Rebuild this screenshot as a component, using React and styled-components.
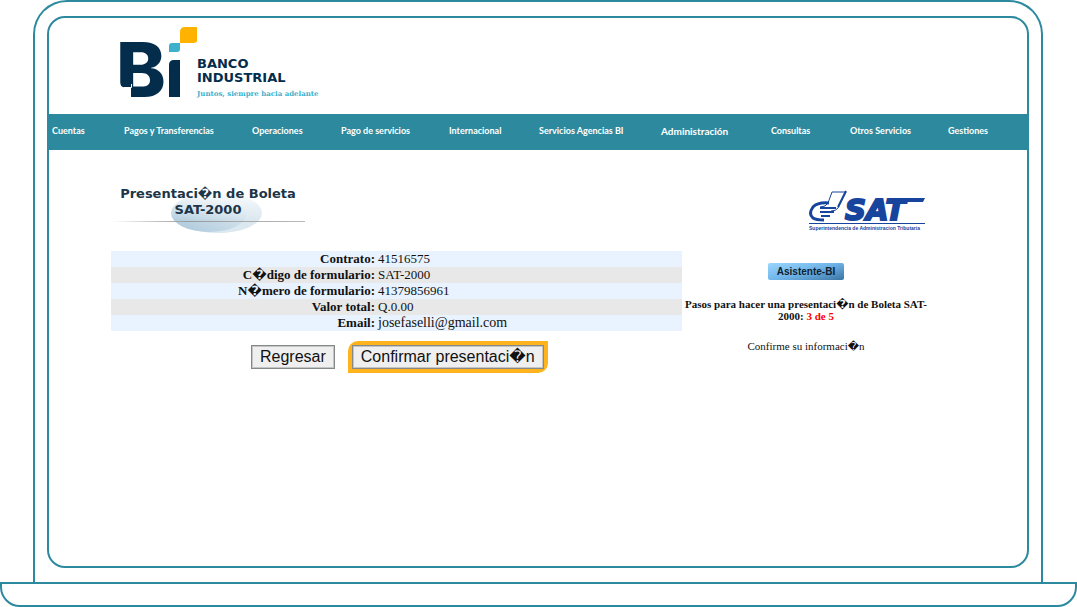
import React from "react"
import styled, { createGlobalStyle, ThemeProvider } from "styled-components"

const theme = {
  colors: {
    teal: "#2d8a9e",
    navy: "#042c4b",
    sky: "#3db1cb",
    highlight: "#ffb31c",
    rowBlue: "#e8f3ff",
    rowGray: "#e8e8e8",
  },
}

const GlobalStyle = createGlobalStyle`
  * {
    box-sizing: border-box;
  }

  body {
    margin: 0;
    background: #fff;
    color: #111;
    font-family: "Liberation Serif", "DejaVu Sans", serif;
  }
`

const Laptop = styled.div`
  min-height: 100vh;
  display: flex;
  flex-direction: column;
`

const Lid = styled.div`
  flex: 1;
  display: flex;
  margin: 0 34px 0 33px;
  padding: 14px 12px;
  border: 2px solid ${({ theme }) => theme.colors.teal};
  border-bottom: none;
  border-radius: 34px 34px 0 0;
`

const Base = styled.div`
  height: 25px;
  border: 2px solid ${({ theme }) => theme.colors.teal};
  border-radius: 0 0 20px 20px;
`

const Screen = styled.div`
  flex: 1;
  min-width: 0;
  overflow: hidden;
  border: 2px solid ${({ theme }) => theme.colors.teal};
  border-radius: 18px;
`

const Header = styled.header`
  display: flex;
  height: 96px;
  padding-left: 61px;
`

const BankName = styled.div`
  padding-top: 39px;
  color: ${({ theme }) => theme.colors.navy};
  font-family: "DejaVu Sans", sans-serif;
  font-size: 13px;
  font-weight: bold;
  line-height: 14px;

  p {
    margin: 0;
  }

  .tagline {
    padding-top: 2px;
    color: ${({ theme }) => theme.colors.sky};
    font-family: "DejaVu Serif", serif;
    font-size: 7px;
  }
`

const Nav = styled.nav`
  display: grid;
  grid-template-columns: 72fr 128fr 89fr 108fr 90fr 122fr 110fr 79fr 98fr 79fr;
  align-items: center;
  height: 36px;
  padding: 0 0 2px 3px;
  background: ${({ theme }) => theme.colors.teal};
`

const NavLink = styled.a`
  color: #fff;
  font-family: Lato, sans-serif;
  font-size: ${({ $large }) => ($large ? "10px" : "9px")};
  font-weight: bold;
  line-height: 12px;
  white-space: nowrap;
  text-decoration: none;
`

const Content = styled.main`
  display: grid;
  grid-template-columns: minmax(0, 571fr) minmax(0, 248fr);
  padding: 36px 97px 0 62px;
`

const TitleBlock = styled.div`
  display: grid;
  width: 194px;
  height: 65px;

  > * {
    grid-area: 1 / 1;
  }
`

const Title = styled.h1`
  margin: 0;
  color: #1c3549;
  font-family: "DejaVu Sans", sans-serif;
  font-size: 13px;
  line-height: 16px;
  text-align: center;
`

const SatSlot = styled.div`
  display: flex;
  justify-content: flex-end;
  padding-right: 4px;
`

const Details = styled.table`
  width: 100%;
  border-collapse: collapse;
  font-size: 13px;
  line-height: 16px;

  tr {
    background: ${({ theme }) => theme.colors.rowBlue};
  }

  tr:nth-child(even) {
    background: ${({ theme }) => theme.colors.rowGray};
  }

  th {
    width: 264px;
    padding: 0;
    text-align: right;
  }

  td {
    padding: 0 0 0 3px;
  }

  tr:last-child td {
    font-size: 14px;
  }
`

const Actions = styled.div`
  display: flex;
  align-items: center;
  gap: 13px;
  padding: 10px 0 0 140px;
`

const ActionButton = styled.button`
  height: 24px;
  padding: 0 8px;
  border: 1px solid #858989;
  box-shadow: inset 0 0 0 1px #c4c6c6;
  background: #efefef;
  color: #111;
  font-family: "Liberation Sans", "DejaVu Sans", sans-serif;
  font-size: 16px;
  line-height: 20px;
  white-space: nowrap;
`

const Highlight = styled.div`
  display: flex;
  border: 4px solid ${({ theme }) => theme.colors.highlight};
  border-radius: 10px 0 10px 0;
`

const Aside = styled.aside`
  display: flex;
  flex-direction: column;
  align-items: center;
  padding-top: 12px;
  font-size: 11px;
  line-height: 12px;
  text-align: center;

  p {
    margin: 18px 0 0;
  }

  .step {
    color: #f00;
  }
`

const AssistantButton = styled.button`
  width: 76px;
  height: 17px;
  padding: 0;
  border: none;
  border-radius: 2px;
  background: linear-gradient(165deg, #9bd6ff 0%, #6fb4e8 50%, #3a75a4 100%);
  color: #10222f;
  font-family: "Liberation Sans", sans-serif;
  font-size: 10px;
  font-weight: bold;
  line-height: 16px;
`

const navItems = [
  "Cuentas",
  "Pagos y Transferencias",
  "Operaciones",
  "Pago de servicios",
  "Internacional",
  "Servicios Agencias BI",
  "Administración",
  "Consultas",
  "Otros Servicios",
  "Gestiones",
]

const details = [
  ["Contrato:", "41516575"],
  ["C\uFFFDdigo de formulario:", "SAT-2000"],
  ["N\uFFFDmero de formulario:", "41379856961"],
  ["Valor total:", "Q.0.00"],
  ["Email:", "josefaselli@gmail.com"],
]

const BiMark = () => (
  <svg width="87" height="104" viewBox="-10 -8 87 104" aria-hidden="true">
    <text
      x="-4"
      y="71"
      fill="#042c4b"
      fontFamily="Inter"
      fontSize="75"
      fontWeight="800"
    >
      B
    </text>
    {/* notch under the stem */}
    <path d="M-2 56 H0 Q0 61 5 61.500 H11 V73 H-2 Z" fill="#fff" />
    <path d="M11.500 58 V61.500 H4" fill="none" stroke="#fff" strokeWidth="1" />
    <path d="M49 71 V39 Q49 34 54 34 H60 V71 Z" fill="#042c4b" />
    <path d="M49 26 V20 Q49 17 52 17 H60 V23 Q60 26 57 26 Z" fill="#3db1cb" />
    <path d="M60 17 V6 Q60 1 65 1 H78 V12 Q78 17 73 17 Z" fill="#ffb300" />
  </svg>
)

const Swoosh = () => (
  <svg width="194" height="56" viewBox="0 0 194 56" aria-hidden="true">
    <defs>
      <linearGradient id="swoosh" x1="0" y1="1" x2="1" y2="0">
        <stop offset="0" stopColor="#a9c6da" />
        <stop offset="0.500" stopColor="#c9dce8" />
        <stop offset="1" stopColor="#eaf2f7" />
      </linearGradient>
      <linearGradient id="fade" x1="0" y1="0" x2="0" y2="1">
        <stop offset="0" stopColor="#fff" />
        <stop offset="1" stopColor="#fff" stopOpacity="0" />
      </linearGradient>
      <linearGradient id="rule">
        <stop offset="0" stopColor="#fff" />
        <stop offset="0.400" stopColor="#999" />
        <stop offset="1" stopColor="#bbb" />
      </linearGradient>
    </defs>
    <ellipse cx="107" cy="27" rx="44" ry="20" fill="#dbe8f0" />
    <ellipse cx="98" cy="27" rx="38" ry="19" fill="url(#swoosh)" />
    <rect x="50" y="0" width="104" height="34" fill="url(#fade)" />
    <rect x="0" y="35" width="194" height="1" fill="url(#rule)" />
  </svg>
)

const SatLogo = () => (
  <svg width="118" height="46" viewBox="0 0 118 46" role="img" aria-label="SAT">
    <g fill="none" stroke="#17449c">
      {/* quill */}
      <path d="M24 6 H38 L30 22 Q28 25 23 25" strokeWidth="1" />
      <path d="M38 5 L30 21" strokeWidth="2" />
      <path d="M24 6 L20 17 Q18 21 12 21" strokeWidth="1" />
      {/* hand */}
      <path d="M21 17 Q10 16 5 21 Q0 28 5 32 Q8 34 16 34" strokeWidth="3" />
      <path d="M12 22 H28 M12 26 H26 M13 30 H22" strokeWidth="2" />
    </g>
    <text
      x="37"
      y="34"
      fill="#17449c"
      stroke="#17449c"
      strokeWidth="2"
      fontFamily="DejaVu Sans"
      fontSize="29"
      fontWeight="bold"
      fontStyle="oblique"
    >
      SAT
    </text>
    <path d="M82 12 H117 L115 16 H82 Z" fill="#17449c" />
    <path d="M1 37.500 H117" stroke="#17449c" strokeWidth="1" />
    <text
      x="1"
      y="44"
      fill="#17449c"
      fontFamily="Liberation Sans"
      fontSize="5"
      fontWeight="bold"
    >
      Superintendencia de Administracion Tributaria
    </text>
  </svg>
)

const App = () => {
  return (
    <ThemeProvider theme={theme}>
      <GlobalStyle />
      <Laptop>
        <Lid>
          <Screen>
            <Header>
              <BiMark />
              <BankName>
                <p>BANCO</p>
                <p>INDUSTRIAL</p>
                <p className="tagline">Juntos, siempre hacia adelante</p>
              </BankName>
            </Header>
            <Nav>
              {navItems.map((item) => (
                <NavLink
                  key={item}
                  href="#"
                  $large={item === "Administración"}
                >
                  {item}
                </NavLink>
              ))}
            </Nav>
            <Content>
              <TitleBlock>
                <Swoosh />
                <Title>Presentaci{"\uFFFD"}n de Boleta SAT-2000</Title>
              </TitleBlock>
              <SatSlot>
                <SatLogo />
              </SatSlot>
              <section>
                <Details>
                  <tbody>
                    {details.map(([label, value]) => (
                      <tr key={label}>
                        <th scope="row">{label}</th>
                        <td>{value}</td>
                      </tr>
                    ))}
                  </tbody>
                </Details>
                <Actions>
                  <ActionButton type="button">Regresar</ActionButton>
                  <Highlight>
                    <ActionButton type="button">
                      Confirmar presentaci{"\uFFFD"}n
                    </ActionButton>
                  </Highlight>
                </Actions>
              </section>
              <Aside>
                <AssistantButton type="button">Asistente-BI</AssistantButton>
                <p>
                  <b>
                    Pasos para hacer una presentaci{"\uFFFD"}n de Boleta
                    SAT-2000: <span className="step">3 de 5</span>
                  </b>
                </p>
                <p>Confirme su informaci{"\uFFFD"}n</p>
              </Aside>
            </Content>
          </Screen>
        </Lid>
        <Base />
      </Laptop>
    </ThemeProvider>
  )
}

export default App
